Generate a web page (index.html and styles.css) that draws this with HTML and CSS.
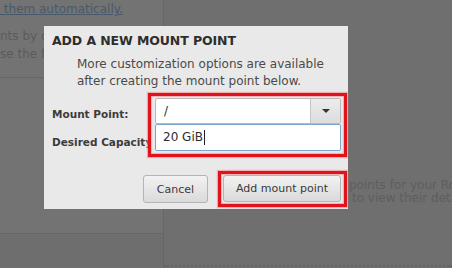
FILE: index.html
```html
<!DOCTYPE html>
<html lang="en">
<head>
  <meta charset="UTF-8">
  <title>Add a new mount point</title>
  <link rel="stylesheet" href="styles.css">
</head>
<body>
  <div class="screen">
    <div class="side">
      <div class="side-top">
        <p class="auto"><a href="#">&nbsp;them automatically.</a></p>
        <p class="hint">nts by cl</p>
        <p class="hint">se the fo</p>
      </div>
      <div class="side-list"></div>
      <div class="side-bottom"></div>
    </div>
    <div class="main">
      <div class="main-empty"></div>
      <p class="main-text">points for your Rocky</p>
      <p class="main-text second">to view their details</p>
      <div class="main-foot"></div>
    </div>
  </div>

  <div class="dialog">
    <h1>ADD A NEW MOUNT POINT</h1>
    <p class="intro">More customization options are available<br>after creating the mount point below.</p>

    <div class="form">
      <div class="labels">
        <label for="mount">Mount Point:</label>
        <label for="capacity">Desired Capacity</label>
      </div>
      <div class="mark fields">
        <div class="combo">
          <input type="text" id="mount" value="/">
          <span class="arrow"></span>
        </div>
        <div class="entry" id="capacity">20 GiB<span class="caret"></span></div>
      </div>
    </div>

    <div class="actions">
      <button class="btn">Cancel</button>
      <div class="mark add">
        <button class="btn">Add mount point</button>
      </div>
    </div>
  </div>
</body>
</html>
```

FILE: styles.css
```css
html, body {
  margin: 0;
  width: 452px;
  height: 268px;
  overflow: hidden;
}
body {
  font-family: 'DejaVu Sans', 'Liberation Sans', sans-serif;
  background-color: #6f6f6f;
  color: #333;
}
p {
  margin: 0;
}
.screen {
  display: flex;
  height: 268px;
}
.side {
  width: 163px;
  flex-shrink: 0;
  background-color: #737373;
  border-right: 1px solid #666;
  display: flex;
  flex-direction: column;
}
.side-top {
  height: 77px;
  border-bottom: 1px solid #676767;
  font-size: 12px;
}
.auto {
  margin-top: 2px;
  line-height: 15px;
}
.auto a {
  color: #49596c;
}
.hint {
  width: 44px;
  overflow: hidden;
  white-space: nowrap;
  color: #5b5b5b;
  line-height: 18px;
}
.auto + .hint {
  margin-top: 10px;
}
.side-list {
  height: 155px;
  border-bottom: 1px solid #666;
}
.side-bottom {
  flex: 1;
  background-color: #6e6e6e;
}
.main {
  flex: 1;
  min-width: 0;
  overflow: hidden;
  display: flex;
  flex-direction: column;
  font-size: 12px;
  color: #5e5e5e;
}
.main-empty {
  height: 179px;
}
.main-text {
  padding-left: 185px;
  line-height: 13px;
  white-space: nowrap;
}
.main-text.second {
  padding-left: 188px;
}
.main-foot {
  margin-top: auto;
  margin-bottom: 1px;
  border-bottom: 2px dotted #646464;
}

/* dialog over the screen */
.dialog {
  position: absolute;
  left: 44px;
  top: 26px;
  width: 304px;
  height: 183px;
  background-color: #e9e9e9;
  box-sizing: border-box;
  padding: 7px 0 0 8px;
}
.dialog h1 {
  margin: 0;
  font-size: 12.5px;
  font-weight: bold;
  color: #2e2e2e;
  line-height: 16px;
  letter-spacing: -0.1px;
}
.intro {
  margin: 7px 0 0 25px;
  font-size: 12px;
  line-height: 17px;
  color: #4a4a4a;
}
.form {
  display: flex;
  margin-top: 3px;
}
.labels {
  width: 96px;
  display: flex;
  flex-direction: column;
  overflow: hidden;
  white-space: nowrap;
}
.labels label {
  font-size: 10.5px;
  font-weight: bold;
  color: #3c3c3c;
}
.labels label:first-child {
  margin-top: 15px;
}
.labels label + label {
  margin-top: 16px;
}
.mark {
  border: 3px solid #e0121b;
  box-shadow: 0 0 1px 1px rgba(240, 120, 120, 0.5), inset 0 0 1px 1px rgba(240, 120, 120, 0.5);
}
.fields {
  padding: 2px 3px 3px 4px;
  width: 186px;
}
.combo {
  display: flex;
  height: 26px;
  box-sizing: border-box;
  border: 1px solid #b9b9b9;
  border-radius: 2px;
  background-color: #fff;
}
.combo input {
  flex: 1;
  min-width: 0;
  border: none;
  outline: none;
  background: transparent;
  font-family: inherit;
  font-size: 12px;
  color: #2e2e2e;
  padding: 0 0 0 8px;
}
.arrow {
  width: 29px;
  border-left: 1px solid #c4c4c4;
  background: linear-gradient(#ececec, #dddddd);
  display: flex;
  align-items: center;
  justify-content: center;
}
.arrow::after {
  content: "";
  border-left: 4px solid transparent;
  border-right: 4px solid transparent;
  border-top: 4px solid #333;
}
.entry {
  height: 27px;
  box-sizing: border-box;
  border: 1px solid #7ea6cb;
  border-radius: 2px;
  background-color: #fff;
  font-size: 12px;
  color: #2e2e2e;
  padding-left: 7px;
  line-height: 25px;
}
.caret {
  display: inline-block;
  width: 1px;
  height: 15px;
  background-color: #222;
  vertical-align: middle;
  margin-left: 1px;
}
.actions {
  display: flex;
  align-items: center;
  margin: 14px 0 0 91px;
}
.btn {
  font-family: inherit;
  font-size: 11px;
  color: #3a3a3a;
  height: 28px;
  padding: 0;
  white-space: nowrap;
  border: 1px solid #b4b4b4;
  border-radius: 3px;
  background: linear-gradient(#f2f2f2, #dadada);
}
.actions > .btn {
  width: 65px;
}
.add {
  margin-left: 10px;
  padding: 0 3px 2px 2px;
}
.add .btn {
  width: 118px;
  height: 27px;
  margin-top: 1px;
}
```
